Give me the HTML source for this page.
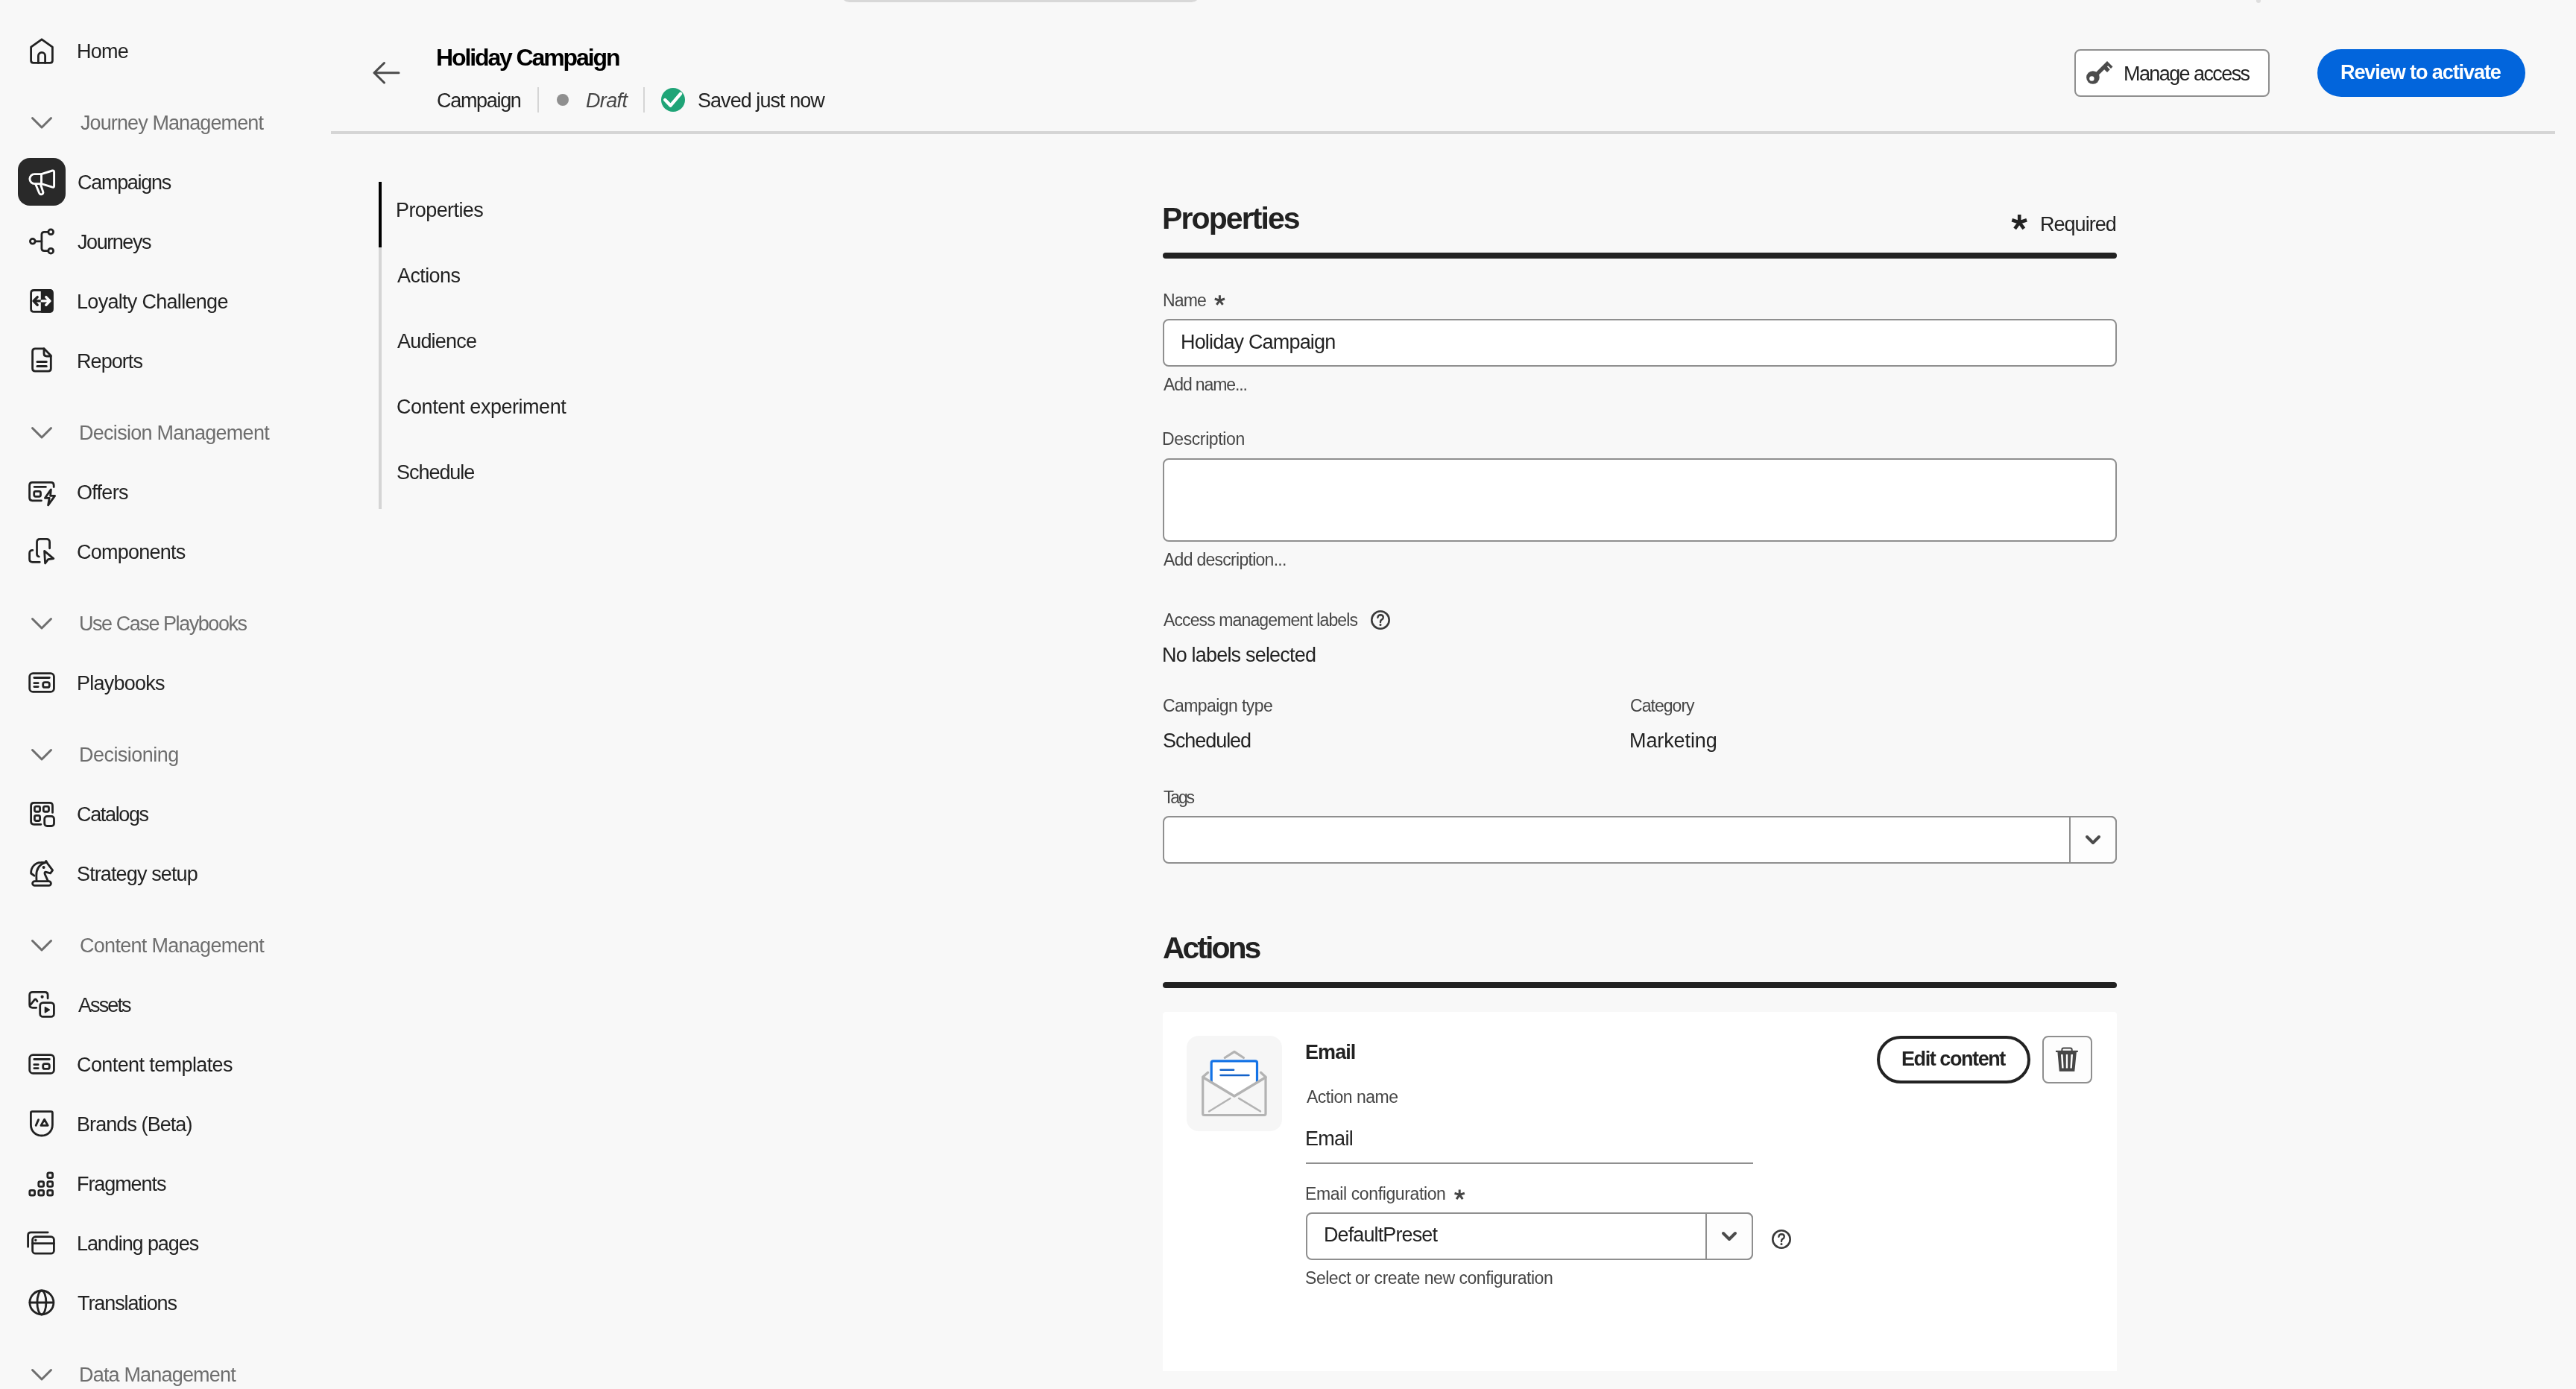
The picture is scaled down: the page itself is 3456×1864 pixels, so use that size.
<!DOCTYPE html>
<html><head><meta charset="utf-8"><title>Holiday Campaign</title>
<style>
html,body{margin:0;padding:0;}
body{width:3456px;height:1864px;background:#f8f8f8;position:relative;overflow:hidden;font-family:"Liberation Sans",sans-serif;}
.t{position:absolute;white-space:nowrap;will-change:transform;}
.r{position:absolute;box-sizing:border-box;overflow:visible;}
</style></head><body>
<svg class="r" style="left:38px;top:50px;" width="36" height="36" viewBox="0 0 36 36"><g fill="none" stroke="#222" stroke-width="2.8" stroke-linecap="round" stroke-linejoin="round"><path d="M3.6 13.2 L18 2.8 L32.4 13.2 V31.2 Q32.4 34.4 29.2 34.4 H6.8 Q3.6 34.4 3.6 31.2 Z"/><path d="M13.4 34.4 V25 A4.6 4.6 0 0 1 22.6 25 V34.4"/></g></svg>
<div class="t" style="left:103.34px;top:56px;font-size:27px;line-height:27px;color:#222;letter-spacing:-0.733px;">Home</div>
<svg class="r" style="left:38px;top:146px;" width="36" height="36" viewBox="0 0 36 36"><path d="M5.5 12.5 L18 25 L30.5 12.5" fill="none" stroke="#6e6e6e" stroke-width="3" stroke-linecap="round" stroke-linejoin="round"/></svg>
<div class="t" style="left:108.00px;top:152px;font-size:27px;line-height:27px;color:#6e6e6e;letter-spacing:-0.897px;">Journey Management</div>
<div class="r" style="left:24px;top:212px;width:64px;height:64px;background:#292929;border-radius:16px;"></div>
<svg class="r" style="left:38px;top:226px;" width="36" height="36" viewBox="0 0 36 36"><g fill="none" stroke="#fff" stroke-width="2.9" stroke-linecap="round" stroke-linejoin="round"><path d="M17.5 7.6 H8.4 A6.5 6.5 0 0 0 8.4 20.6 H17.5 Z"/><path d="M17.5 7.6 L32.2 3 Q34.6 2.4 34.6 4.8 V23.4 Q34.6 25.8 32.2 25.2 L17.5 20.6"/><path d="M9.8 21.2 L14.6 33 Q15.8 35.6 18.4 34.6 Q20.6 33.6 19.6 31 L16.4 21.2"/></g></svg>
<div class="t" style="left:103.72px;top:232px;font-size:27px;line-height:27px;color:#222;letter-spacing:-1.290px;">Campaigns</div>
<svg class="r" style="left:38px;top:306px;" width="36" height="36" viewBox="0 0 36 36"><g fill="none" stroke="#222" stroke-width="2.8" stroke-linecap="round" stroke-linejoin="round"><circle cx="5.8" cy="17.8" r="3.4"/><circle cx="30.2" cy="5.3" r="3.4"/><circle cx="30.2" cy="30.7" r="3.4"/><path d="M9.2 17.8 H17.9"/><path d="M26.8 5.3 H21.4 Q17.9 5.3 17.9 8.8 V27.2 Q17.9 30.7 21.4 30.7 H26.8"/></g></svg>
<div class="t" style="left:104.24px;top:312px;font-size:27px;line-height:27px;color:#222;letter-spacing:-1.433px;">Journeys</div>
<svg class="r" style="left:38px;top:386px;" width="36" height="36" viewBox="0 0 36 36"><g fill="none" stroke="#222" stroke-width="2.8" stroke-linecap="round" stroke-linejoin="round"><path d="M18.2 3.5 H28.3 Q32.3 3.5 32.3 7.5 V28.4 Q32.3 32.4 28.3 32.4 H18.2 Z" fill="#222"/><path d="M7.6 3.5 H28.3 Q32.3 3.5 32.3 7.5 V28.4 Q32.3 32.4 28.3 32.4 H7.6 Q3.6 32.4 3.6 28.4 V7.5 Q3.6 3.5 7.6 3.5 Z"/><path d="M18.2 17.9 H8 M12.2 12.6 L7 17.9 L12.2 23.2" stroke-width="3.4"/><path d="M18.2 17.9 H28 M23.8 12.6 L29 17.9 L23.8 23.2" stroke="#fff" stroke-width="3.4"/></g></svg>
<div class="t" style="left:103.34px;top:392px;font-size:27px;line-height:27px;color:#222;letter-spacing:-0.702px;">Loyalty Challenge</div>
<svg class="r" style="left:38px;top:466px;" width="36" height="36" viewBox="0 0 36 36"><g fill="none" stroke="#222" stroke-width="2.8" stroke-linecap="round" stroke-linejoin="round"><path d="M5.6 5.5 Q5.6 1.8 9.3 1.8 H21 L30.3 11.2 V28.4 Q30.3 32.1 26.6 32.1 H9.3 Q5.6 32.1 5.6 28.4 Z"/><path d="M21 1.8 V8.5 Q21 12 24.5 12 H30.3"/><path d="M12 19.5 H24.2 M12 25.5 H24.2" stroke-width="3.2"/></g></svg>
<div class="t" style="left:103.34px;top:472px;font-size:27px;line-height:27px;color:#222;letter-spacing:-0.942px;">Reports</div>
<svg class="r" style="left:38px;top:562px;" width="36" height="36" viewBox="0 0 36 36"><path d="M5.5 12.5 L18 25 L30.5 12.5" fill="none" stroke="#6e6e6e" stroke-width="3" stroke-linecap="round" stroke-linejoin="round"/></svg>
<div class="t" style="left:106.20px;top:568px;font-size:27px;line-height:27px;color:#6e6e6e;letter-spacing:-0.719px;">Decision Management</div>
<svg class="r" style="left:38px;top:642px;" width="36" height="36" viewBox="0 0 36 36"><g fill="none" stroke="#222" stroke-width="2.8" stroke-linecap="round" stroke-linejoin="round"><path d="M34.2 11.5 V9.2 Q34.2 5.4 30.4 5.4 H5.4 Q1.6 5.4 1.6 9.2 V26 Q1.6 29.8 5.4 29.8 H17.5"/><path d="M8.1 11.4 H23.4"/><rect x="7.7" y="17.3" width="8.8" height="7" rx="2"/><path d="M30.4 14.9 L22.4 26.4 H28.2 L26.6 35.9 L35.6 23.4 H29.6 Z"/></g></svg>
<div class="t" style="left:103.34px;top:648px;font-size:27px;line-height:27px;color:#222;letter-spacing:-0.726px;">Offers</div>
<svg class="r" style="left:38px;top:722px;" width="36" height="36" viewBox="0 0 36 36"><g fill="none" stroke="#222" stroke-width="2.8" stroke-linecap="round" stroke-linejoin="round"><path d="M28.6 13.8 V5.6 Q28.6 1.4 24.4 1.4 H15.7 Q11.5 1.4 11.5 5.6 V21.5 Q11.5 24.3 14.3 25"/><path d="M5.8 16.4 H5.6 Q1.6 16.4 1.6 20.4 V28.3 Q1.6 32.3 5.6 32.3 H15.3"/><path d="M21.6 17.4 L33.8 27.6 L26.6 28.6 L22.6 34 Z"/></g></svg>
<div class="t" style="left:103.34px;top:728px;font-size:27px;line-height:27px;color:#222;letter-spacing:-0.752px;">Components</div>
<svg class="r" style="left:38px;top:818px;" width="36" height="36" viewBox="0 0 36 36"><path d="M5.5 12.5 L18 25 L30.5 12.5" fill="none" stroke="#6e6e6e" stroke-width="3" stroke-linecap="round" stroke-linejoin="round"/></svg>
<div class="t" style="left:106.20px;top:824px;font-size:27px;line-height:27px;color:#6e6e6e;letter-spacing:-1.445px;">Use Case Playbooks</div>
<svg class="r" style="left:38px;top:898px;" width="36" height="36" viewBox="0 0 36 36"><g fill="none" stroke="#222" stroke-width="2.8" stroke-linecap="round" stroke-linejoin="round"><rect x="1.7" y="5.6" width="32.7" height="24.8" rx="4.5"/><path d="M7.8 11.5 H28.3"/><path d="M7.8 18.7 H13.2 M7.8 23.6 H13.2"/><rect x="19.7" y="17.7" width="8.6" height="6.7" rx="2.5"/></g></svg>
<div class="t" style="left:103.34px;top:904px;font-size:27px;line-height:27px;color:#222;letter-spacing:-0.766px;">Playbooks</div>
<svg class="r" style="left:38px;top:994px;" width="36" height="36" viewBox="0 0 36 36"><path d="M5.5 12.5 L18 25 L30.5 12.5" fill="none" stroke="#6e6e6e" stroke-width="3" stroke-linecap="round" stroke-linejoin="round"/></svg>
<div class="t" style="left:106.20px;top:1000px;font-size:27px;line-height:27px;color:#6e6e6e;letter-spacing:-0.542px;">Decisioning</div>
<svg class="r" style="left:38px;top:1074px;" width="36" height="36" viewBox="0 0 36 36"><g fill="none" stroke="#222" stroke-width="2.8" stroke-linecap="round" stroke-linejoin="round"><path d="M32.5 16.4 V7.3 Q32.5 3.3 28.5 3.3 H7.6 Q3.6 3.3 3.6 7.3 V28.3 Q3.6 32.3 7.6 32.3 H16.9"/><rect x="8.4" y="8.05" width="7.2" height="7.2" rx="2"/><rect x="20.3" y="8.05" width="7.2" height="7.2" rx="2"/><rect x="8.4" y="20.3" width="7.2" height="7.2" rx="2"/><rect x="21.7" y="21.4" width="12.8" height="13.1" rx="3.6"/></g></svg>
<div class="t" style="left:103.34px;top:1080px;font-size:27px;line-height:27px;color:#222;letter-spacing:-1.351px;">Catalogs</div>
<svg class="r" style="left:38px;top:1154px;" width="36" height="36" viewBox="0 0 36 36"><g fill="none" stroke="#222" stroke-width="2.8" stroke-linecap="round" stroke-linejoin="round"><rect x="5.6" y="28.6" width="24.8" height="5.8" rx="2.9"/><path d="M8 21.2 L3.6 18 C3.4 9.5 9 3.6 17 3.4 C19 3.3 21 3.4 22.6 3.6"/><path d="M22.6 3.6 C14.5 5.8 10.6 13 10.8 21 L11 28.4"/><path d="M22.6 3.6 L23.8 1.4 L25.6 4.6 L32.6 13.8 L29.6 17.8 L23.2 16.2 Q21.4 16.4 22.2 19.2 L26.4 28.4"/><circle cx="20.6" cy="10" r="1.3" fill="#222" stroke-width="1.4"/></g></svg>
<div class="t" style="left:103.34px;top:1160px;font-size:27px;line-height:27px;color:#222;letter-spacing:-0.880px;">Strategy setup</div>
<svg class="r" style="left:38px;top:1250px;" width="36" height="36" viewBox="0 0 36 36"><path d="M5.5 12.5 L18 25 L30.5 12.5" fill="none" stroke="#6e6e6e" stroke-width="3" stroke-linecap="round" stroke-linejoin="round"/></svg>
<div class="t" style="left:107.10px;top:1256px;font-size:27px;line-height:27px;color:#6e6e6e;letter-spacing:-0.708px;">Content Management</div>
<svg class="r" style="left:38px;top:1330px;" width="36" height="36" viewBox="0 0 36 36"><g fill="none" stroke="#222" stroke-width="2.8" stroke-linecap="round" stroke-linejoin="round"><path d="M10.7 22.3 H5.7 Q1.7 22.3 1.7 18.3 V5.3 Q1.7 1.3 5.7 1.3 H22.1 Q26.1 1.3 26.1 5.3 V9.8"/><path d="M3.3 18 L8.5 11.4 Q9.4 10.6 10.4 11.2 L12 13.7"/><circle cx="18.6" cy="7.7" r="1.5" fill="#222" stroke-width="1.2"/><rect x="15.7" y="15.6" width="18.7" height="18.8" rx="4"/><path d="M22.4 21.6 V28.8 L28.4 25.2 Z" fill="#222" stroke-width="1.4"/></g></svg>
<div class="t" style="left:105.14px;top:1336px;font-size:27px;line-height:27px;color:#222;letter-spacing:-1.886px;">Assets</div>
<svg class="r" style="left:38px;top:1410px;" width="36" height="36" viewBox="0 0 36 36"><g fill="none" stroke="#222" stroke-width="2.8" stroke-linecap="round" stroke-linejoin="round"><rect x="1.7" y="5.6" width="32.7" height="24.8" rx="4.5"/><path d="M7.8 11.5 H28.3"/><path d="M7.8 18.7 H13.2 M7.8 23.6 H13.2"/><rect x="19.7" y="17.7" width="8.6" height="6.7" rx="2.5"/></g></svg>
<div class="t" style="left:103.34px;top:1416px;font-size:27px;line-height:27px;color:#222;letter-spacing:-0.599px;">Content templates</div>
<svg class="r" style="left:38px;top:1490px;" width="36" height="36" viewBox="0 0 36 36"><g fill="none" stroke="#222" stroke-width="2.8" stroke-linecap="round" stroke-linejoin="round"><path d="M5.2 1.6 H30.6 Q32.4 1.6 32.4 3.4 V19.5 C32.4 28 25.8 34 17.9 34 C10 34 3.4 28 3.4 19.5 V3.4 Q3.4 1.6 5.2 1.6 Z"/><path d="M10.2 20.4 L13.6 12.6"/><path d="M17 20.4 L21.6 12.2 L26.2 20.4 Z"/></g></svg>
<div class="t" style="left:103.34px;top:1496px;font-size:27px;line-height:27px;color:#222;letter-spacing:-0.927px;">Brands (Beta)</div>
<svg class="r" style="left:38px;top:1570px;" width="36" height="36" viewBox="0 0 36 36"><g fill="none" stroke="#222" stroke-width="2.8" stroke-linecap="round" stroke-linejoin="round"><rect x="25.8" y="3.8000000000000003" width="6.8" height="6.8" rx="1.9" stroke-width="2.8"/><rect x="13.799999999999999" y="15.6" width="6.8" height="6.8" rx="1.9" stroke-width="2.8"/><rect x="25.8" y="15.6" width="6.8" height="6.8" rx="1.9" stroke-width="2.8"/><rect x="1.8000000000000003" y="27.400000000000002" width="6.8" height="6.8" rx="1.9" stroke-width="2.8"/><rect x="13.799999999999999" y="27.400000000000002" width="6.8" height="6.8" rx="1.9" stroke-width="2.8"/><rect x="25.8" y="27.400000000000002" width="6.8" height="6.8" rx="1.9" stroke-width="2.8"/></g></svg>
<div class="t" style="left:103.34px;top:1576px;font-size:27px;line-height:27px;color:#222;letter-spacing:-1.079px;">Fragments</div>
<svg class="r" style="left:38px;top:1650px;" width="36" height="36" viewBox="0 0 36 36"><g fill="none" stroke="#222" stroke-width="2.8" stroke-linecap="round" stroke-linejoin="round"><path d="M-0.4 23.2 V7.8 Q-0.4 3.8 3.6 3.8 H26.2"/><rect x="5.6" y="9.7" width="28.8" height="22.5" rx="4"/><path d="M5.6 18.7 H34.4"/><circle cx="9.8" cy="14.3" r="1.1" fill="#222" stroke-width="1.2"/></g></svg>
<div class="t" style="left:103.34px;top:1656px;font-size:27px;line-height:27px;color:#222;letter-spacing:-1.085px;">Landing pages</div>
<svg class="r" style="left:38px;top:1730px;" width="36" height="36" viewBox="0 0 36 36"><g fill="none" stroke="#222" stroke-width="2.8" stroke-linecap="round" stroke-linejoin="round"><circle cx="17.9" cy="18" r="16"/><ellipse cx="17.9" cy="18" rx="6" ry="16"/><path d="M2 18 H33.8"/></g></svg>
<div class="t" style="left:104.24px;top:1736px;font-size:27px;line-height:27px;color:#222;letter-spacing:-1.095px;">Translations</div>
<svg class="r" style="left:38px;top:1826px;" width="36" height="36" viewBox="0 0 36 36"><path d="M5.5 12.5 L18 25 L30.5 12.5" fill="none" stroke="#6e6e6e" stroke-width="3" stroke-linecap="round" stroke-linejoin="round"/></svg>
<div class="t" style="left:106.20px;top:1832px;font-size:27px;line-height:27px;color:#6e6e6e;letter-spacing:-0.818px;">Data Management</div>
<div class="r" style="left:1128px;top:-20px;width:482px;height:23px;background:#d8d8d8;border-radius:14px;"></div>
<div class="r" style="left:3027px;top:-4px;width:6px;height:8px;background:#dedede;border-radius:3px;"></div>
<svg class="r" style="left:496px;top:80px;" width="44" height="36" viewBox="0 0 44 36"><path d="M39 17.7 H7 M19.5 4.5 L6 17.7 L19.5 31" fill="none" stroke="#4b4b4b" stroke-width="3" stroke-linecap="round" stroke-linejoin="round"/></svg>
<div class="t" style="left:585.20px;top:61px;font-size:32px;line-height:32px;color:#000;letter-spacing:-2.110px;font-weight:700;">Holiday Campaign</div>
<div class="t" style="left:586.10px;top:122px;font-size:27px;line-height:27px;color:#222;letter-spacing:-1.314px;">Campaign</div>
<div class="r" style="left:721px;top:117px;width:2px;height:34px;background:#d5d5d5;"></div>
<div class="r" style="left:747px;top:126px;width:16px;height:16px;background:#8f8f8f;border-radius:50%;"></div>
<div class="t" style="left:786.10px;top:122px;font-size:27px;line-height:27px;color:#464646;letter-spacing:-0.650px;font-style:italic;">Draft</div>
<div class="r" style="left:863px;top:117px;width:2px;height:34px;background:#d5d5d5;"></div>
<svg class="r" style="left:887px;top:118px;" width="32" height="32" viewBox="0 0 32 32"><circle cx="16" cy="16" r="16" fill="#1fa477"/><path d="M5.2 16 L12.6 23.6 L26 7.8" fill="none" stroke="#fff" stroke-width="4.4" stroke-linecap="round" stroke-linejoin="round"/></svg>
<div class="t" style="left:936.10px;top:122px;font-size:27px;line-height:27px;color:#222;letter-spacing:-0.950px;">Saved just now</div>
<div class="r" style="left:444px;top:176px;width:2984px;height:4px;background:#d5d5d5;"></div>
<div class="r" style="left:2783px;top:66px;width:262px;height:64px;background:#fff;border:2px solid #8f8f8f;border-radius:8px;"></div>
<svg class="r" style="left:2796px;top:79px;" width="40" height="36" viewBox="0 0 40 36"><path d="M14 20 L31 3 L38.5 10.5 L36 13 L32.15 9.15 L30.9 10.4 L34.75 14.25 L31 18 L27.15 14.15 L18 23.3 Z" fill="#4b4b4b"/><circle cx="11.9" cy="25" r="8.8" fill="#4b4b4b"/><circle cx="10.4" cy="26.5" r="3.2" fill="#fff"/></svg>
<div class="t" style="left:2848.96px;top:86px;font-size:27px;line-height:27px;color:#222;letter-spacing:-1.588px;">Manage access</div>
<div class="r" style="left:3109px;top:66px;width:279px;height:64px;background:#0265dc;border-radius:32px;"></div>
<div class="t" style="left:3140.20px;top:84px;font-size:27px;line-height:27px;color:#fff;letter-spacing:-1.076px;font-weight:700;">Review to activate</div>
<div class="r" style="left:508px;top:244px;width:4px;height:439px;background:#d5d5d5;"></div>
<div class="r" style="left:508px;top:244px;width:4px;height:88px;background:#000;"></div>
<div class="t" style="left:530.82px;top:269px;font-size:27px;line-height:27px;color:#222;letter-spacing:-0.589px;">Properties</div>
<div class="t" style="left:532.62px;top:357px;font-size:27px;line-height:27px;color:#222;letter-spacing:-0.600px;">Actions</div>
<div class="t" style="left:532.62px;top:445px;font-size:27px;line-height:27px;color:#222;letter-spacing:-0.807px;">Audience</div>
<div class="t" style="left:531.72px;top:533px;font-size:27px;line-height:27px;color:#222;letter-spacing:-0.465px;">Content experiment</div>
<div class="t" style="left:531.72px;top:621px;font-size:27px;line-height:27px;color:#222;letter-spacing:-1.039px;">Schedule</div>
<div class="t" style="left:1559.30px;top:273px;font-size:41px;line-height:41px;color:#222;letter-spacing:-1.906px;font-weight:700;">Properties</div>
<svg class="r" style="left:2694px;top:282px;" width="30" height="30" viewBox="0 0 30 30"><path d="M15.20 16.50 L15.20 6.10 M15.20 16.50 L25.09 13.29 M15.20 16.50 L21.31 24.91 M15.20 16.50 L9.09 24.91 M15.20 16.50 L5.31 13.29 " fill="none" stroke="#222" stroke-width="4.6" stroke-linecap="butt"/></svg>
<div class="t" style="left:2737.15px;top:288px;font-size:27px;line-height:27px;color:#222;letter-spacing:-0.971px;">Required</div>
<div class="r" style="left:1560px;top:339px;width:1280px;height:8px;background:#222;border-radius:4px;"></div>
<div class="t" style="left:1559.96px;top:392px;font-size:23px;line-height:23px;color:#464646;letter-spacing:-0.817px;">Name</div>
<svg class="r" style="left:1626px;top:392px;" width="21" height="21" viewBox="0 0 21 21"><path d="M10.40 11.20 L10.40 4.20 M10.40 11.20 L17.06 9.04 M10.40 11.20 L14.51 16.86 M10.40 11.20 L6.29 16.86 M10.40 11.20 L3.74 9.04 " fill="none" stroke="#464646" stroke-width="3.0" stroke-linecap="butt"/></svg>
<div class="r" style="left:1560px;top:428px;width:1280px;height:64px;background:#fff;border:2px solid #8f8f8f;border-radius:8px;"></div>
<div class="t" style="left:1583.77px;top:446px;font-size:27px;line-height:27px;color:#222;letter-spacing:-0.825px;">Holiday Campaign</div>
<div class="t" style="left:1561.00px;top:505px;font-size:23px;line-height:23px;color:#464646;letter-spacing:-1.120px;">Add name...</div>
<div class="t" style="left:1559.20px;top:578px;font-size:23px;line-height:23px;color:#464646;letter-spacing:-0.387px;">Description</div>
<div class="r" style="left:1560px;top:615px;width:1280px;height:112px;background:#fff;border:2px solid #8f8f8f;border-radius:8px;"></div>
<div class="t" style="left:1561.00px;top:740px;font-size:23px;line-height:23px;color:#464646;letter-spacing:-0.725px;">Add description...</div>
<div class="t" style="left:1561.00px;top:821px;font-size:23px;line-height:23px;color:#464646;letter-spacing:-0.883px;">Access management labels</div>
<svg class="r" style="left:1837px;top:817px;" width="30" height="30" viewBox="0 0 30 30"><circle cx="15" cy="15" r="11.7" fill="none" stroke="#3a3a3a" stroke-width="2.6"/><path d="M11.4 11.8 Q11.6 8.2 15.2 8.2 Q18.8 8.3 18.8 11.4 Q18.8 13.4 16.6 14.6 Q15 15.5 15 17.4 V18" fill="none" stroke="#3a3a3a" stroke-width="2.4" stroke-linecap="round"/><circle cx="15" cy="21.6" r="1.5" fill="#3a3a3a"/></svg>
<div class="t" style="left:1559.20px;top:866px;font-size:27px;line-height:27px;color:#222;letter-spacing:-0.807px;">No labels selected</div>
<div class="t" style="left:1560.10px;top:936px;font-size:23px;line-height:23px;color:#464646;letter-spacing:-0.579px;">Campaign type</div>
<div class="t" style="left:1560.10px;top:981px;font-size:27px;line-height:27px;color:#222;letter-spacing:-1.070px;">Scheduled</div>
<div class="t" style="left:2187.10px;top:936px;font-size:23px;line-height:23px;color:#464646;letter-spacing:-0.961px;">Category</div>
<div class="t" style="left:2186.20px;top:981px;font-size:27px;line-height:27px;color:#222;letter-spacing:-0.106px;">Marketing</div>
<div class="t" style="left:1561.00px;top:1059px;font-size:23px;line-height:23px;color:#464646;letter-spacing:-2.200px;">Tags</div>
<div class="r" style="left:1560px;top:1095px;width:1280px;height:64px;background:#fff;border:2px solid #8f8f8f;border-radius:8px;"></div>
<div class="r" style="left:2776px;top:1095px;width:64px;height:64px;background:#fdfdfd;border:2px solid #8f8f8f;border-radius:0 8px 8px 0;"></div>
<svg class="r" style="left:2794px;top:1117px;" width="28" height="20" viewBox="0 0 28 20"><path d="M6 6 L14 14 L22 6" fill="none" stroke="#4b4b4b" stroke-width="4" stroke-linecap="round" stroke-linejoin="round"/></svg>
<div class="t" style="left:1559.72px;top:1252px;font-size:41px;line-height:41px;color:#222;letter-spacing:-3.020px;font-weight:700;">Actions</div>
<div class="r" style="left:1560px;top:1318px;width:1280px;height:8px;background:#222;border-radius:4px;"></div>
<div class="r" style="left:1560px;top:1358px;width:1280px;height:482px;background:#fff;border-radius:4px 4px 0 0;"></div>
<div class="r" style="left:1592px;top:1390px;width:128px;height:128px;background:#f6f6f6;border-radius:16px;"></div>
<svg class="r" style="left:1592px;top:1390px;" width="128" height="128" viewBox="0 0 128 128"><g fill="none" stroke-linecap="round" stroke-linejoin="round"><path d="M51.2 29.5 L64 21.4 L76.5 29.5" stroke="#b3b3b3" stroke-width="3.2"/><rect x="33.2" y="33.9" width="61.3" height="56" rx="2.5" fill="#fff" stroke="#1473e6" stroke-width="3.2"/><path d="M45.6 45.8 H63.1 M45.6 53 H83.4" stroke="#1262c9" stroke-width="2.6"/><path d="M21.7 55.8 L64 81 L106 55.8 V106.5 H21.7 Z" fill="#f6f6f6" stroke="none"/><path d="M28.6 49.3 L21.7 55.3 V104.5 Q21.7 106.5 23.7 106.5 H104 Q106 106.5 106 104.5 V55.3 L99.5 49.3" stroke="#b3b3b3" stroke-width="3.2"/><path d="M22.1 55.8 L64 81 L106 55.8" stroke="#b3b3b3" stroke-width="3.5"/><path d="M30 101.4 L58.5 83.9 M70 83.9 L99 101.4" stroke="#b3b3b3" stroke-width="2.4"/></g></svg>
<div class="t" style="left:1751.20px;top:1399px;font-size:27px;line-height:27px;color:#222;letter-spacing:-0.945px;font-weight:700;">Email</div>
<div class="t" style="left:1753.00px;top:1461px;font-size:23px;line-height:23px;color:#464646;letter-spacing:-0.485px;">Action name</div>
<div class="t" style="left:1751.34px;top:1515px;font-size:27px;line-height:27px;color:#222;letter-spacing:-0.700px;">Email</div>
<div class="r" style="left:1752px;top:1560px;width:600px;height:2px;background:#8f8f8f;"></div>
<div class="t" style="left:1751.34px;top:1591px;font-size:23px;line-height:23px;color:#464646;letter-spacing:-0.372px;">Email configuration</div>
<svg class="r" style="left:1948px;top:1593px;" width="21" height="21" viewBox="0 0 21 21"><path d="M10.20 10.40 L10.20 3.40 M10.20 10.40 L16.86 8.24 M10.20 10.40 L14.31 16.06 M10.20 10.40 L6.09 16.06 M10.20 10.40 L3.54 8.24 " fill="none" stroke="#464646" stroke-width="3.0" stroke-linecap="butt"/></svg>
<div class="r" style="left:1752px;top:1627px;width:600px;height:64px;background:#fff;border:2px solid #8f8f8f;border-radius:8px;"></div>
<div class="r" style="left:2288px;top:1627px;width:64px;height:64px;background:#fdfdfd;border:2px solid #8f8f8f;border-radius:0 8px 8px 0;"></div>
<svg class="r" style="left:2306px;top:1649px;" width="28" height="20" viewBox="0 0 28 20"><path d="M6 6 L14 14 L22 6" fill="none" stroke="#4b4b4b" stroke-width="4" stroke-linecap="round" stroke-linejoin="round"/></svg>
<div class="t" style="left:1775.58px;top:1644px;font-size:27px;line-height:27px;color:#222;letter-spacing:-0.888px;">DefaultPreset</div>
<svg class="r" style="left:2375px;top:1648px;" width="30" height="30" viewBox="0 0 30 30"><circle cx="15" cy="15" r="11.7" fill="none" stroke="#3a3a3a" stroke-width="2.6"/><path d="M11.4 11.8 Q11.6 8.2 15.2 8.2 Q18.8 8.3 18.8 11.4 Q18.8 13.4 16.6 14.6 Q15 15.5 15 17.4 V18" fill="none" stroke="#3a3a3a" stroke-width="2.4" stroke-linecap="round"/><circle cx="15" cy="21.6" r="1.5" fill="#3a3a3a"/></svg>
<div class="t" style="left:1751.34px;top:1704px;font-size:23px;line-height:23px;color:#464646;letter-spacing:-0.456px;">Select or create new configuration</div>
<div class="r" style="left:2518px;top:1390px;width:206px;height:64px;background:#fff;border:4px solid #222;border-radius:32px;"></div>
<div class="t" style="left:2550.53px;top:1408px;font-size:27px;line-height:27px;color:#222;letter-spacing:-1.425px;font-weight:700;">Edit content</div>
<div class="r" style="left:2740px;top:1390px;width:67px;height:64px;background:#fdfdfd;border:2px solid #8f8f8f;border-radius:8px;"></div>
<svg class="r" style="left:2756px;top:1404px;" width="34" height="36" viewBox="0 0 34 36"><path d="M10.4 6.4 V4.6 Q10.4 2.4 12.6 2.4 H21.5 Q23.7 2.4 23.7 4.6 V6.4" fill="none" stroke="#464646" stroke-width="2"/><path d="M2 6.9 H31.8" stroke="#464646" stroke-width="2.2"/><path d="M4.4 7.6 H29.9 L27.3 33.8 H6.8 Z" fill="#464646"/><path d="M9.0 11 H11.6 L12.6 29.6 H10.2 Z M15.8 11 H18.1 V29.6 H15.8 Z M22.4 11 H25 L23.8 29.6 H21.4 Z" fill="#fff"/></svg>
</body></html>
